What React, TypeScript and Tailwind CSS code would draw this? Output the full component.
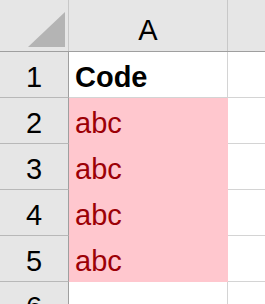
const rows = [
  { n: 1, value: 'Code', kind: 'head' },
  { n: 2, value: 'abc', kind: 'bad' },
  { n: 3, value: 'abc', kind: 'bad' },
  { n: 4, value: 'abc', kind: 'bad' },
  { n: 5, value: 'abc', kind: 'bad' },
  { n: 6, value: '', kind: 'empty' },
];

export default function App() {
  return (
    <div className="w-[265px] h-[304px] overflow-hidden bg-white font-['Liberation_Sans',Arial,sans-serif] text-[29px] text-black">
      {/* column headings */}
      <div className="flex h-[52px] border-b border-[#9f9f9f] bg-[#e6e6e6]">
        <div className="flex w-[69px] shrink-0 items-end justify-end border-r border-[#c8c8c8] pr-[3px] pb-[4px]">
          <svg width="37" height="35" viewBox="0 0 37 35">
            <polygon points="0,35 37,0 37,35" fill="#b4b4b4" />
          </svg>
        </div>
        <div className="flex w-[159px] shrink-0 items-end justify-center border-r border-[#c8c8c8] pb-[6px] leading-none">
          A
        </div>
        <div className="flex-1" />
      </div>

      {rows.map((row) => (
        <div key={row.n} className="flex h-[46px]">
          <div className="flex w-[69px] shrink-0 items-end justify-center border-r border-b border-r-[#9f9f9f] border-b-[#b8b8b8] bg-[#e6e6e6] pb-[5px] leading-none">
            {row.n}
          </div>
          <div
            className={
              row.kind === 'bad'
                ? 'flex w-[159px] shrink-0 items-end border-r border-b border-[#ffc7ce] bg-[#ffc7ce] pl-[6px] pb-[5px] leading-none text-[#9c0006]'
                : 'flex w-[159px] shrink-0 items-end border-r border-b border-[#d4d4d4] pl-[6px] pb-[5px] leading-none font-bold'
            }
          >
            {row.value}
          </div>
          <div className="flex-1 border-b border-[#d4d4d4]" />
        </div>
      ))}
    </div>
  );
}
